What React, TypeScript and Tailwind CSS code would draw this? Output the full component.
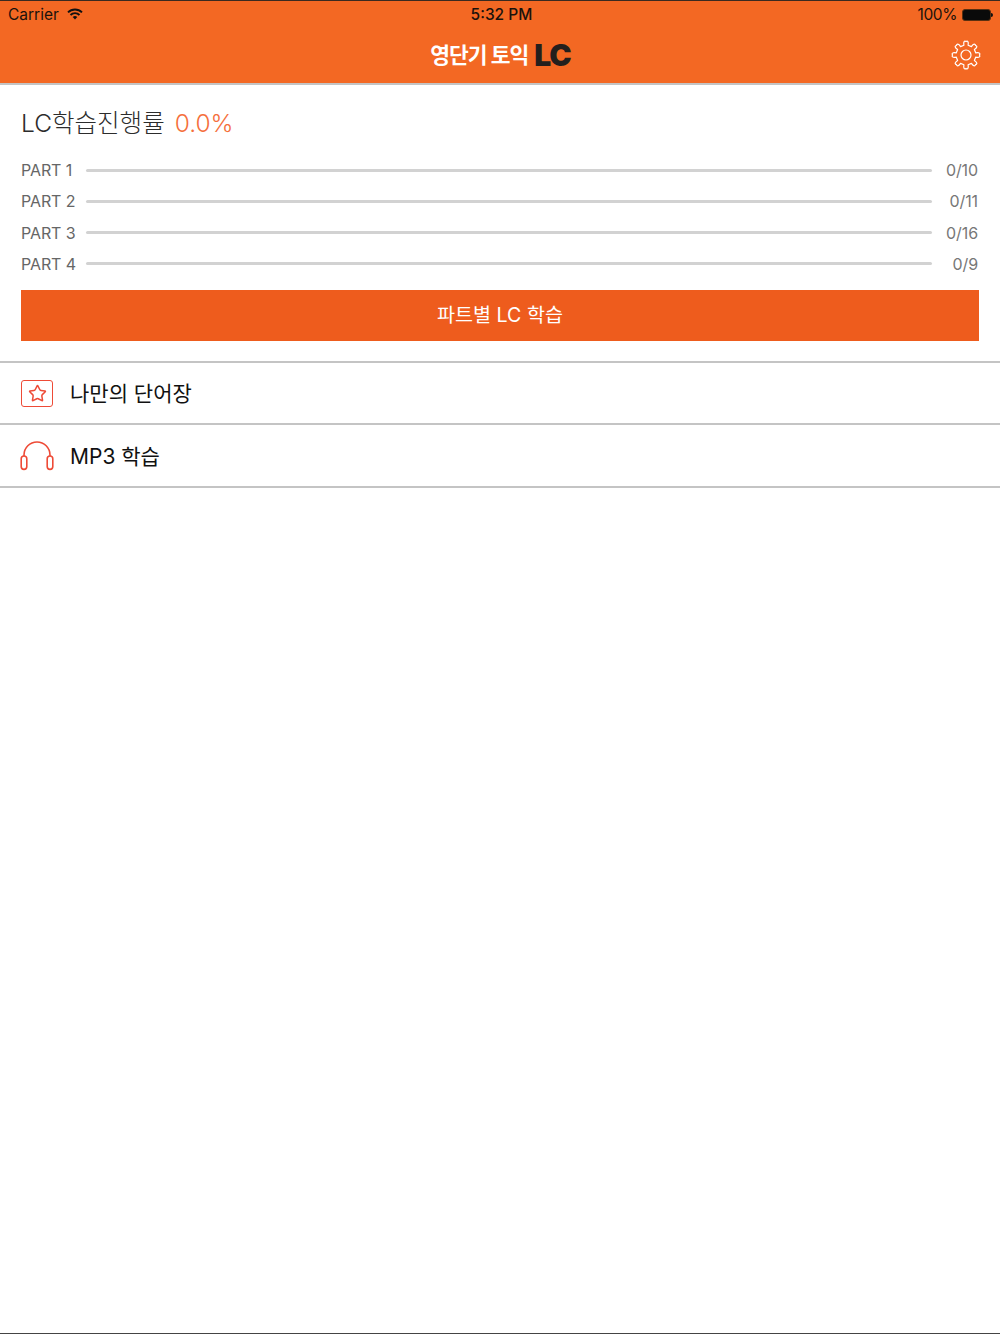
import { Star } from "lucide-react";

const sans = "font-['Inter','Noto_Sans_CJK_KR',sans-serif]";

const parts = [
  { name: "PART 1", score: "0/10" },
  { name: "PART 2", score: "0/11" },
  { name: "PART 3", score: "0/16" },
  { name: "PART 4", score: "0/9" },
];

// 8-tooth gear outline, rounded enough by the stroke join
function gearPath(cx: number, cy: number, outer: number, inner: number) {
  const teeth = 8;
  const step = (Math.PI * 2) / teeth;
  const pt = (r: number, a: number) => `${(cx + r * Math.cos(a)).toFixed(2)} ${(cy + r * Math.sin(a)).toFixed(2)}`;
  let d = "";
  for (let i = 0; i < teeth; i++) {
    const a = i * step - Math.PI / 2;
    const start = `${pt(inner, a - step * 0.27)}`;
    d += `${i === 0 ? "M" : "L"}${start} `;
    d += `C${pt(outer * 1.03, a - step * 0.26)} ${pt(outer * 1.09, a - step * 0.13)} ${pt(outer, a)} `;
    d += `C${pt(outer * 1.09, a + step * 0.13)} ${pt(outer * 1.03, a + step * 0.26)} ${pt(inner, a + step * 0.27)} `;
  }
  return d + "Z";
}

function Gear() {
  return (
    <svg width="30" height="30" viewBox="0 0 30 30" fill="none" stroke="#fff" strokeWidth="1.2" strokeLinejoin="round">
      <path d={gearPath(15, 15, 13.4, 10)} />
      <circle cx="15" cy="15" r="5" />
    </svg>
  );
}

function Wifi() {
  return (
    <svg width="16" height="12" viewBox="0 0 16 12" className="mb-[2px] ml-2">
      <path d="M1 4.4a10 10 0 0 1 14 0" fill="none" stroke="#111" strokeWidth="1.9" />
      <path d="M3.5 7a6.4 6.4 0 0 1 9 0" fill="none" stroke="#111" strokeWidth="1.9" />
      <path d="M5.7 9a3.3 3.3 0 0 1 4.6 0L8 11.6z" fill="#111" />
    </svg>
  );
}

function Headphones() {
  return (
    <svg width="34" height="30" viewBox="0 0 34 30" fill="none" stroke="#ee4b37" strokeWidth="1.6">
      <path d="M4 15V14a13 13 0 0 1 26 0v1" />
      <rect x="1.2" y="15" width="5.6" height="13.4" rx="2.8" />
      <rect x="27.2" y="15" width="5.6" height="13.4" rx="2.8" />
    </svg>
  );
}

export default function App() {
  return (
    <div className={`${sans} flex min-h-[1334px] flex-col border-b border-[#444] bg-white`}>
      <header className="h-[85px] border-t border-b-2 border-t-[#3a2a20] border-b-[#c4c4c4] bg-[#f36823]">
        <div className="flex h-[27px] items-center justify-between pr-[7px] pl-2 text-[15.5px] text-[#1a120c]">
          <div className="flex w-[200px] items-center">
            Carrier
            <Wifi />
          </div>
          <span className="ml-[2px] font-medium">5:32 PM</span>
          <div className="flex w-[200px] items-center justify-end">
            <span className="tracking-[-0.4px]">100%</span>
            <span className="ml-[5px] flex items-center">
              <span className="h-[12px] w-[29px] rounded-[3px] border border-[#5a3010] bg-[#0a0a0a]" />
              <span className="h-[4px] w-[2px] rounded-r-sm bg-[#111]" />
            </span>
          </div>
        </div>
        <div className="flex h-[54px] items-center justify-between pr-[19px] pl-5">
          <span className="w-[30px]" />
          <div className="flex items-center text-[21.5px] font-bold tracking-[-1px] text-white">
            영단기 토익
            <span className="ml-[6px] text-[30px] leading-none font-black text-[#231f1d]">LC</span>
          </div>
          <Gear />
        </div>
      </header>

      <section className="border-b-2 border-[#c4c4c4] px-[21px] pt-[21px] pb-[20px]">
        <div className="flex h-[34px] items-center text-[24.5px] leading-none font-light text-[#2c2c2c]">
          LC학습진행률
          <span className="ml-[10px] text-[#f56f3c]">0.0%</span>
        </div>
        <div className="mt-[18px] flex flex-col gap-[7.3px]">
          {parts.map((part) => (
            <div key={part.name} className="flex h-6 items-center text-[16px] font-normal tracking-[-0.1px] text-[#666]">
              <span className="w-[65px]">{part.name}</span>
              <div className="h-[3px] flex-1 rounded-full bg-[#d2d2d2]" />
              <span className="w-[46px] text-right text-[#777]">{part.score}</span>
              <span className="w-px" />
            </div>
          ))}
        </div>
        <button className="mt-[14px] flex h-[51px] w-full items-center justify-center bg-[#ee5c1d] text-[19.6px] font-normal text-white">
          파트별 LC 학습
        </button>
      </section>

      <div className="flex h-[62px] items-center gap-[17px] border-b-2 border-[#c4c4c4] pt-[2px] pl-[21px] text-[21px] font-normal text-[#111]">
        <span className="flex h-[27px] w-[32px] items-center justify-center rounded-[3px] border-[1.5px] border-[#ee4b37]">
          <Star size={19} strokeWidth={1.9} className="text-[#ee4b37]" />
        </span>
        나만의 단어장
      </div>
      <div className="flex h-[63px] items-center gap-[16px] border-b-2 border-[#c4c4c4] pt-[2px] pl-5 text-[21px] font-normal text-[#111]">
        <Headphones />
        MP3 학습
      </div>
    </div>
  );
}
